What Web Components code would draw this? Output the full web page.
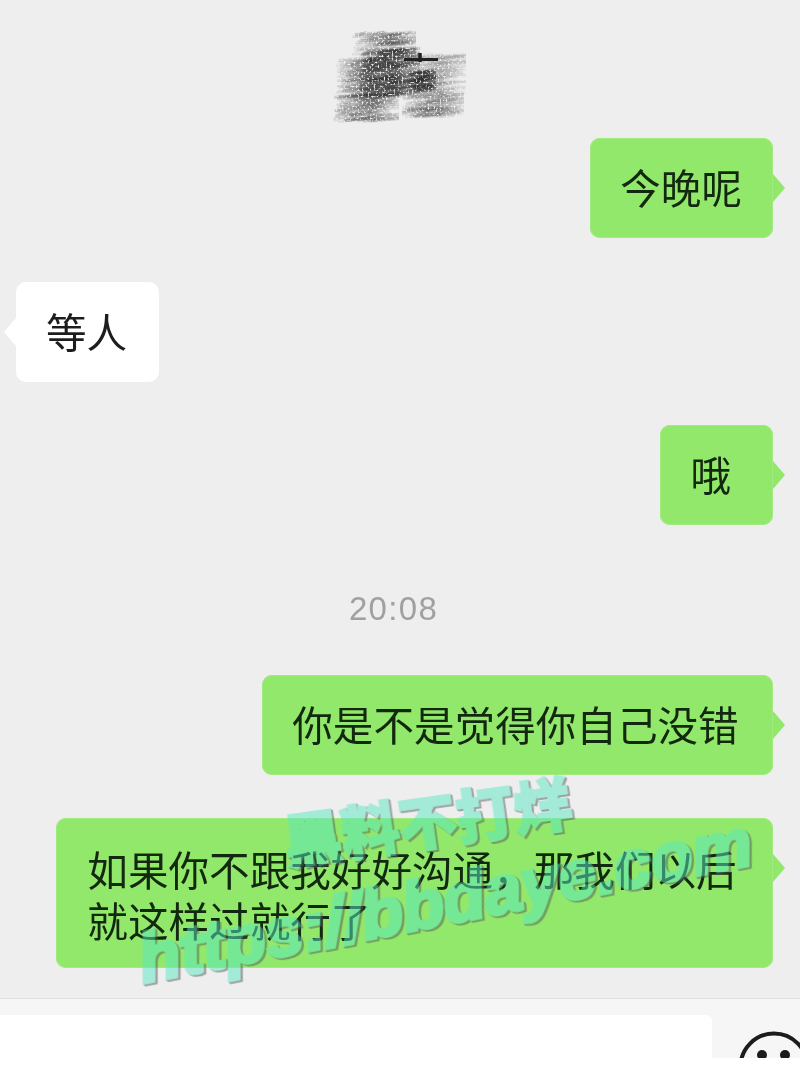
<!DOCTYPE html>
<html lang="zh">
<head>
<meta charset="utf-8">
<title>chat</title>
<style>
  html, body { margin: 0; padding: 0; background: #eeeeee; }
  body { width: 800px; height: 1067px; overflow: hidden; }
</style>
</head>
<body>
<chat-screen>
  <redacted-name slot="header"></redacted-name>
  <chat-bubble side="right" style="--pad:30px;--pad-end:31px">今晚呢</chat-bubble>
  <chat-bubble side="left" style="margin-top:44px;--pad:30px;--pad-end:32px">等人</chat-bubble>
  <chat-bubble side="right" style="margin-top:43px;--pad:30px;--pad-end:42px">哦</chat-bubble>
  <chat-time>20:08</chat-time>
  <chat-bubble side="right" style="--pad:30px;--pad-end:34.4px">你是不是觉得你自己没错</chat-bubble>
  <chat-bubble side="right" style="margin-top:43px;--pad:31px;--pad-end:36.4px;--pad-t:25px;--pad-b:23px">如果你不跟我好好沟通，那我们以后<br>就这样过就行了</chat-bubble>
  <chat-input slot="footer"></chat-input>
  <water-mark slot="overlay"></water-mark>
</chat-screen>

<script>
class ChatScreen extends HTMLElement {
    constructor() {
        super();
        this.attachShadow({mode: 'open'}).innerHTML = `
        <style>
        :host {
            display: flex;
            flex-direction: column;
            position: relative;
            width: 800px;
            height: 1067px;
            overflow: hidden;
            background: #eeeeee;
            font-family: "Noto Sans CJK SC", "Noto Sans", sans-serif;
        }
        .list {
            flex: 1;
            display: flex;
            flex-direction: column;
        }
        </style>
        <slot name="header"></slot>
        <div class="list"><slot></slot></div>
        <slot name="footer"></slot>
        <slot name="overlay"></slot>
        `;
    }
}

class ChatBubble extends HTMLElement {
    constructor() {
        super();
        this.attachShadow({mode: 'open'}).innerHTML = `
        <style>
        :host {
            display: flex;
            flex: none;
            font-size: 40.6px;
            line-height: 51px;
            color: #12280f;
        }
        :host([side="right"]) { justify-content: flex-end; padding-right: 27px; }
        :host([side="left"]) { justify-content: flex-start; padding-left: 16px; }
        .box {
            position: relative;
            display: grid;
            align-content: center;
            box-sizing: border-box;
            min-height: 100px;
            padding: var(--pad-t, 22px) var(--pad-end) var(--pad-b, 26px) var(--pad);
            border-radius: 10px;
            background: #92e86a;
            box-shadow: inset 0 0 0 1px #a0ea80;
            white-space: nowrap;
            filter: blur(.4px);
        }
        :host([side="left"]) .box {
            background: #ffffff;
            box-shadow: none;
            color: #1d1d1d;
        }
        .box::after {
            content: "";
            position: absolute;
            top: 36px;
            width: 12px;
            height: 28px;
            background: inherit;
        }
        :host([side="right"]) .box::after {
            right: -12px;
            clip-path: polygon(0 0, 100% 50%, 0 100%);
        }
        :host([side="left"]) .box::after {
            left: -12px;
            clip-path: polygon(100% 0, 0 50%, 100% 100%);
        }
        </style>
        <div class="box"><slot></slot></div>
        `;
    }
}

class ChatTime extends HTMLElement {
    constructor() {
        super();
        this.attachShadow({mode: 'open'}).innerHTML = `
        <style>
        :host {
            display: flex;
            justify-content: center;
            flex: none;
            height: 40px;
            margin: 64px 13px 46px 0;
            font: 33px/40px "Liberation Sans", sans-serif;
            letter-spacing: 1.3px;
            color: #a0a0a0;
            filter: blur(.5px);
        }
        </style>
        <slot></slot>
        `;
    }
}

class RedactedName extends HTMLElement {
    constructor() {
        super();
        let seed = 7;
        const rnd = () => {
            seed = (seed * 16807) % 2147483647;
            return seed / 2147483647;
        };
        // pencil scribble: x, y, w, h, density, opacity
        const blocks = [
            [352, 34, 64, 22, 110, .08],
            [358, 50, 62, 48, 340, .11],
            [336, 60, 58, 36, 180, .07],
            [333, 96, 66, 26, 140, .08],
            [404, 56, 62, 40, 180, .045],
            [402, 96, 62, 22, 120, .065],
            [406, 72, 30, 20, 100, .14]
        ];
        let lines = '';
        for (const [x, y, w, h, n, o] of blocks) {
            for (let i = 0; i < n; i++) {
                const x1 = x + rnd() * w * .6;
                const y1 = y + rnd() * h;
                const len = 10 + rnd() * w * .5;
                const x2 = Math.min(x + w, x1 + len);
                const y2 = y1 - 1 - rnd() * 2.5;
                lines += `<path d="M${x1.toFixed(1)} ${y1.toFixed(1)}L${x2.toFixed(1)} ${y2.toFixed(1)}" stroke-opacity="${o}"/>`;
            }
        }
        this.attachShadow({mode: 'open'}).innerHTML = `
        <style>
        :host {
            display: flex;
            justify-content: center;
            flex: none;
            height: 138px;
        }
        svg { display: block; width: 800px; height: 138px; }
        </style>
        <svg viewBox="0 0 800 138" aria-hidden="true">
            <defs>
                <filter id="grain" x="-5%" y="-5%" width="110%" height="110%">
                    <feTurbulence type="fractalNoise" baseFrequency=".5" numOctaves="2" seed="4" result="n"/>
                    <feColorMatrix in="n" type="matrix" values="0 0 0 0 0  0 0 0 0 0  0 0 0 0 0  0 0 0 -4 3" result="m"/>
                    <feComposite in="SourceGraphic" in2="m" operator="in"/>
                    <feGaussianBlur stdDeviation=".6"/>
                </filter>
            </defs>
            <g filter="url(#grain)" stroke="#2b2b2b" stroke-width="2.8" fill="none">${lines}</g>
            <g stroke="#222" fill="none" style="filter:blur(.7px)">
                <path d="M404 59.5H438" stroke-width="3"/>
                <path d="M420 53V62" stroke-width="3.5"/>
                <path d="M410 76H434M410 86H432" stroke-width="2" stroke-opacity=".35"/>
                <path d="M371 57V62M385 55V62" stroke-width="3" stroke-opacity=".45"/>
            </g>
        </svg>
        `;
    }
}

class ChatInput extends HTMLElement {
    constructor() {
        super();
        this.attachShadow({mode: 'open'}).innerHTML = `
        <style>
        :host {
            display: block;
            flex: none;
            height: 69px;
            background: #ffffff;
        }
        .bar {
            display: flex;
            height: 60px;
            box-sizing: border-box;
            padding-top: 16px;
            overflow: hidden;
            background: #f6f6f6;
            border-top: 1px solid #dedede;
        }
        .field {
            flex: none;
            width: 712px;
            height: 60px;
            background: #ffffff;
            border-radius: 0 6px 0 0;
        }
        svg { flex: none; margin: 16px 0 0 26px; width: 72px; height: 72px; }
        </style>
        <div class="bar">
            <div class="field"></div>
            <svg viewBox="0 0 72 72" aria-hidden="true">
                <circle cx="36" cy="36" r="33.5" fill="none" stroke="#1c1c1c" stroke-width="4"/>
                <circle cx="24" cy="24" r="5" fill="#1c1c1c"/>
                <circle cx="47" cy="24" r="5" fill="#1c1c1c"/>
            </svg>
        </div>
        `;
    }
}

class WaterMark extends HTMLElement {
    constructor() {
        super();
        this.attachShadow({mode: 'open'}).innerHTML = `
        <style>
        :host {
            position: absolute;
            left: 0;
            top: 0;
            width: 800px;
            height: 1067px;
            pointer-events: none;
        }
        div {
            position: absolute;
            white-space: nowrap;
            color: #5ae8c3;
            opacity: .5;
            -webkit-text-stroke: 3.5px #5ae8c3;
            filter: drop-shadow(1.5px 1.5px 0 #555) drop-shadow(1.5px 1.5px 0 #555) blur(.4px);
        }
        .name {
            left: 282px;
            top: 784px;
            font: 900 58px/70px "Noto Sans CJK SC", sans-serif;
            -webkit-text-stroke-width: 2px;
            transform: rotate(-8deg);
        }
        .url {
            left: 133px;
            top: 860px;
            font: italic 700 68px/80px "Liberation Sans", sans-serif;
            transform: rotate(-11deg);
        }
        </style>
        <div class="name">黑料不打烊</div>
        <div class="url">https://bbdaye.com</div>
        `;
    }
}

customElements.define('chat-screen', ChatScreen);
customElements.define('chat-bubble', ChatBubble);
customElements.define('chat-time', ChatTime);
customElements.define('redacted-name', RedactedName);
customElements.define('chat-input', ChatInput);
customElements.define('water-mark', WaterMark);
</script>
</body>
</html>
